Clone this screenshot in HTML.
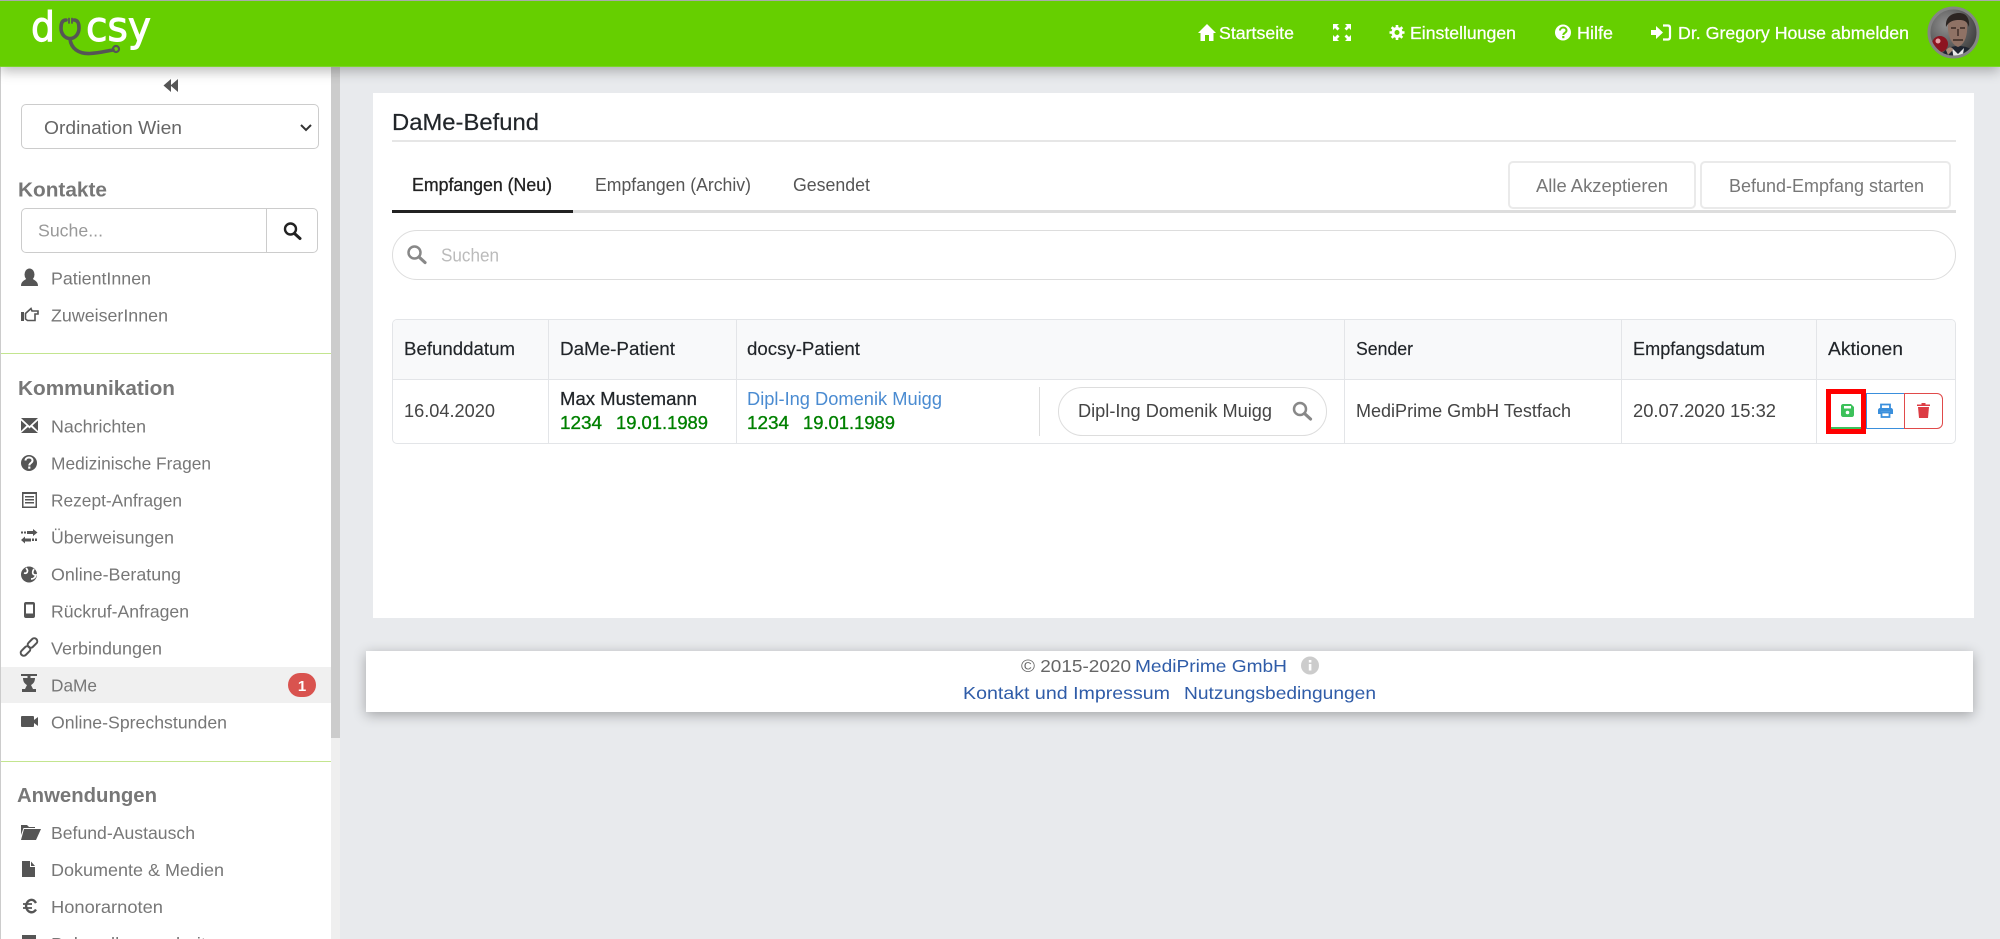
<!DOCTYPE html>
<html lang="de"><head><meta charset="utf-8"><title>docsy – DaMe-Befund</title>
<style>
html,body{margin:0;padding:0;width:2000px;height:939px;overflow:hidden;background:#e8eaed;font-family:"Liberation Sans",sans-serif}
.b{position:absolute;box-sizing:border-box}
svg{position:absolute;left:0;top:0;filter:blur(.3px)}
text{font-family:"Liberation Sans",sans-serif}
.s{font-size:17.5px;fill:#777}
.h{font-size:20px;font-weight:bold;fill:#777}
.w{font-size:17.5px;fill:#fff;stroke:#fff;stroke-width:.25}
.t{font-size:18.5px;fill:#444}
.th{font-size:18.5px;fill:#212529;stroke:#212529;stroke-width:.15}
.g{font-size:18.5px;fill:#008000;stroke:#008000;stroke-width:.35}
.f{font-size:17.5px;fill:#2f5ca8}
</style></head><body>
<div class="b" style="left:0;top:1px;width:331px;height:938px;background:#fff;border-left:1px solid #ccc"></div>
<div class="b" style="left:331px;top:66px;width:9px;height:672px;background:#ccc"></div>
<div class="b" style="left:331px;top:738px;width:9px;height:201px;background:#efefef"></div>
<div class="b" style="left:0;top:0;width:2000px;height:67px;background:#66cf00;border-top:1px solid #aaa;border-bottom:1px solid #7ad42a;box-shadow:0 4px 12px rgba(0,0,0,.28)"></div>
<div class="b" style="left:21px;top:104px;width:298px;height:45px;border:1px solid #ccc;border-radius:5px"></div>
<div class="b" style="left:21px;top:208px;width:297px;height:45px;border:1px solid #ccc;border-radius:5px"></div>
<div class="b" style="left:266px;top:209px;width:1px;height:43px;background:#ccc"></div>
<div class="b" style="left:1px;top:353px;width:330px;height:1px;background:#c3e58f"></div>
<div class="b" style="left:1px;top:761px;width:330px;height:1px;background:#c3e58f"></div>
<div class="b" style="left:1px;top:667px;width:330px;height:36px;background:#f0f0f0"></div>
<div class="b" style="left:288px;top:673px;width:28px;height:24px;background:#d9534f;border-radius:12px"></div>
<div class="b" style="left:373px;top:93px;width:1601px;height:525px;background:#fff"></div>
<div class="b" style="left:392px;top:140px;width:1564px;height:2px;background:#e6e6e6"></div>
<div class="b" style="left:392px;top:210px;width:1564px;height:3px;background:#ddd"></div>
<div class="b" style="left:392px;top:210px;width:181px;height:3px;background:#222"></div>
<div class="b" style="left:1508px;top:161px;width:188px;height:48px;background:#fff;border:2px solid #eaeaea;border-radius:5px"></div>
<div class="b" style="left:1700px;top:161px;width:251px;height:48px;background:#fff;border:2px solid #eaeaea;border-radius:5px"></div>
<div class="b" style="left:392px;top:230px;width:1564px;height:50px;border:1px solid #ddd;border-radius:25px"></div>
<div class="b" style="left:392px;top:319px;width:1564px;height:125px;border:1px solid #e3e5e8;border-radius:5px;background:#fff;overflow:hidden">
  <div class="b" style="left:0;top:0;width:100%;height:60px;background:#f8f9fa;border-bottom:1px solid #e3e5e8"></div>
  <div class="b" style="left:155px;top:0;width:1px;height:125px;background:#e3e5e8"></div>
  <div class="b" style="left:343px;top:0;width:1px;height:125px;background:#e3e5e8"></div>
  <div class="b" style="left:951px;top:0;width:1px;height:125px;background:#e3e5e8"></div>
  <div class="b" style="left:1228px;top:0;width:1px;height:125px;background:#e3e5e8"></div>
  <div class="b" style="left:1423px;top:0;width:1px;height:125px;background:#e3e5e8"></div>
</div>
<div class="b" style="left:1039px;top:387px;width:1px;height:49px;background:#ddd"></div>
<div class="b" style="left:1058px;top:387px;width:269px;height:49px;border:1px solid #ddd;border-radius:25px"></div>
<div class="b" style="left:1866px;top:393px;width:39px;height:36px;border:1px solid #3a8fdc"></div>
<div class="b" style="left:1904px;top:393px;width:39px;height:36px;border:1px solid #e04a4a;border-radius:0 6px 6px 0"></div>
<div class="b" style="left:1831px;top:427px;width:30px;height:2px;background:#3cc15a"></div>
<div class="b" style="left:1826px;top:389px;width:40px;height:45px;border:5px solid #f00"></div>
<div class="b" style="left:366px;top:651px;width:1607px;height:61px;background:#fff;box-shadow:0 3px 12px rgba(0,0,0,.3)"></div>

<svg width="2000" height="939" viewBox="0 0 2000 939">
<!-- logo -->
<text x="31" y="41" style="font-family:'DejaVu Sans',sans-serif;font-size:41px;fill:#fff;stroke:#fff;stroke-width:1" textLength="24" lengthAdjust="spacingAndGlyphs">d</text>
<text x="86" y="41" style="font-family:'DejaVu Sans',sans-serif;font-size:41px;fill:#fff;stroke:#fff;stroke-width:1" textLength="65" lengthAdjust="spacingAndGlyphs">csy</text>
<g fill="none" stroke="#555" stroke-width="3.6" stroke-linecap="round">
<path d="M66 20C62 20 61 24 61 28C61 34 65 38.500 70 38.500C75 38.500 79 34 79 28C79 24 78 20 74 20"/>
<path d="M69 18.500V23M72 18.500V23" stroke-width="1.800"/>
<path d="M70 39C71 48 78 54 90 53.500C100 53 106 51 113 50"/>
<circle cx="116" cy="49" r="3" stroke-width="2.200"/>
</g>
<!-- header nav -->
<path fill="#fff" d="M1207 24L1216 33H1213.500V41H1209V35H1205V41H1200.500V33H1198Z"/>
<text class="w" x="1219" y="39" textLength="75" lengthAdjust="spacingAndGlyphs">Startseite</text>
<g fill="#fff"><path d="M1333 24H1339L1337 26L1339.500 28.500L1337.500 30.500L1335 28L1333 30Z"/><path d="M1351 24H1345L1347 26L1344.500 28.500L1346.500 30.500L1349 28L1351 30Z"/><path d="M1333 41H1339L1337 39L1339.500 36.500L1337.500 34.500L1335 37L1333 35Z"/><path d="M1351 41H1345L1347 39L1344.500 36.500L1346.500 34.500L1349 37L1351 35Z"/></g>
<g stroke="#fff" stroke-width="2.600"><path d="M1397 25V40M1389.500 32.500H1404.500M1391.700 27.200L1402.300 37.800M1402.300 27.200L1391.700 37.800"/></g>
<circle cx="1397" cy="32.500" r="4" fill="#66cf00" stroke="#fff" stroke-width="3"/>
<text class="w" x="1410" y="39" textLength="106" lengthAdjust="spacingAndGlyphs">Einstellungen</text>
<circle cx="1563" cy="32.500" r="8" fill="#fff"/>
<path d="M1560 30.500C1560 26.500 1566.500 26.500 1566.500 30.500C1566.500 32.800 1563.300 32.800 1563.300 35" fill="none" stroke="#66cf00" stroke-width="2"/><rect x="1562.200" y="36" width="2.200" height="2.200" fill="#66cf00"/>
<text class="w" x="1577" y="39" textLength="36" lengthAdjust="spacingAndGlyphs">Hilfe</text>
<path fill="#fff" d="M1651 30H1656V26L1663 32.500L1656 39V35H1651Z"/>
<path fill="none" stroke="#fff" stroke-width="2.200" d="M1663 25.500H1668C1669.500 25.500 1670 26.500 1670 28V37C1670 38.500 1669.500 39.500 1668 39.500H1663"/>
<text class="w" x="1678" y="39" textLength="231" lengthAdjust="spacingAndGlyphs">Dr. Gregory House abmelden</text>
<!-- avatar -->
<defs><clipPath id="av"><circle cx="1953.500" cy="32.500" r="24"/></clipPath><radialGradient id="abg" cx=".35" cy=".35" r=".75"><stop offset="0" stop-color="#8f8f8f"/><stop offset="1" stop-color="#333"/></radialGradient></defs>
<g clip-path="url(#av)">
<rect x="1928" y="7" width="52" height="52" fill="url(#abg)"/>
<path d="M1940 60C1942 50 1950 46 1958 46C1968 46 1976 50 1978 60Z" fill="#1f2530"/>
<path d="M1952 48L1958 54L1964 48L1962 60H1954Z" fill="#e8e8e8"/>
<path d="M1948 22C1947 32 1950 44 1958 47C1966 44 1968 32 1967 22C1963 18 1952 18 1948 22Z" fill="#8f7265"/>
<path d="M1946 27C1945 16 1953 13 1959 13C1966 13 1970 18 1969 27C1967 21 1964 20 1959 20C1954 20 1949 21 1946 27Z" fill="#2c2522"/>
<path d="M1951 28H1956M1960 28H1965M1958 29V36M1953 40H1963" stroke="#3a2a25" stroke-width="1.400" fill="none"/>
<circle cx="1940" cy="44" r="8" fill="#8d1420"/><circle cx="1938" cy="41" r="2.500" fill="#e6a0a5"/>
<path d="M1946 50C1949 46 1953 47 1953 50L1948 55Z" fill="#a88a78"/>
</g>
<circle cx="1953.500" cy="32.500" r="24.500" fill="none" stroke="#858585" stroke-width="3"/>
<!-- sidebar top -->
<path fill="#555" d="M171 79V92L163.500 85.500ZM178 79V92L170.500 85.500Z"/>
<text class="s" x="44" y="134" textLength="138" lengthAdjust="spacingAndGlyphs" style="fill:#666;font-size:18px">Ordination Wien</text>
<path d="M301 125L306 130L311 125" fill="none" stroke="#333" stroke-width="2"/>
<g transform="translate(0,-.6)">
<text class="h" x="18" y="197" textLength="89" lengthAdjust="spacingAndGlyphs">Kontakte</text>
<text class="s" x="38" y="237" textLength="65" lengthAdjust="spacingAndGlyphs" style="fill:#999">Suche...</text>
<text class="s" x="51" y="285" textLength="100" lengthAdjust="spacingAndGlyphs">PatientInnen</text>
<text class="s" x="51" y="322" textLength="117" lengthAdjust="spacingAndGlyphs">ZuweiserInnen</text>
<text class="s" x="51" y="433" textLength="95" lengthAdjust="spacingAndGlyphs">Nachrichten</text>
<text class="s" x="51" y="470" textLength="160" lengthAdjust="spacingAndGlyphs">Medizinische Fragen</text>
<text class="s" x="51" y="507" textLength="131" lengthAdjust="spacingAndGlyphs">Rezept-Anfragen</text>
<text class="s" x="51" y="544" textLength="123" lengthAdjust="spacingAndGlyphs">Überweisungen</text>
<text class="s" x="51" y="581" textLength="130" lengthAdjust="spacingAndGlyphs">Online-Beratung</text>
<text class="s" x="51" y="618" textLength="138" lengthAdjust="spacingAndGlyphs">Rückruf-Anfragen</text>
<text class="s" x="51" y="655" textLength="111" lengthAdjust="spacingAndGlyphs">Verbindungen</text>
<text class="s" x="51" y="692" textLength="46" lengthAdjust="spacingAndGlyphs">DaMe</text>
<text class="s" x="51" y="729" textLength="176" lengthAdjust="spacingAndGlyphs">Online-Sprechstunden</text>
</g>
<circle cx="290.500" cy="229" r="5.500" fill="none" stroke="#222" stroke-width="2.400"/><path d="M294.500 233.500L300 238.500" stroke="#222" stroke-width="3" stroke-linecap="round"/>
<text class="h" x="18" y="395" textLength="157" lengthAdjust="spacingAndGlyphs">Kommunikation</text>
<text x="302" y="691" text-anchor="middle" style="font-size:15px;font-weight:bold;fill:#fff">1</text>
<text class="h" x="17" y="802" textLength="140" lengthAdjust="spacingAndGlyphs">Anwendungen</text>
<text class="s" x="51" y="839" textLength="144" lengthAdjust="spacingAndGlyphs">Befund-Austausch</text>
<text class="s" x="51" y="876" textLength="173" lengthAdjust="spacingAndGlyphs">Dokumente &amp; Medien</text>
<text class="s" x="51" y="913" textLength="112" lengthAdjust="spacingAndGlyphs">Honorarnoten</text>
<text class="s" x="51" y="950" textLength="155" lengthAdjust="spacingAndGlyphs">Behandlungsarbeit</text>
<!-- sidebar icons -->
<g fill="#555">
<ellipse cx="29.500" cy="274.500" rx="5" ry="6"/><path d="M21 286C21 281 25 280 27 278.500H32C34 280 38 281 38 286Z"/>
<rect x="21" y="312" width="3" height="9"/><path d="M25.500 313.500L31 308.500L32 311H38V314H35V320.500H27.500L25.500 319Z" fill="none" stroke="#555" stroke-width="1.600"/>
<path d="M21 418H38L29.500 426ZM21 420.500L26.500 425.500L21 431ZM38 420.500L32.500 425.500L38 431ZM21 433L28 427L29.500 428.500L31 427L38 433Z"/>
<circle cx="29" cy="463" r="8"/>
<path d="M22 492H37V508H22ZM23.500 494V506.500H35.500V494Z" fill-rule="evenodd"/><path d="M25 496H34V497.500H25ZM25 499H34V500.500H25ZM25 502H34V503.500H25Z"/>
<path d="M27 531H33V529L37.500 532.500L33 536V534H27ZM21 531.500H23V533.500H21ZM24 531.500H26V533.500H24ZM31 538.500H25V536.500L21 540L25 543.500V541.500H31ZM32 538.500H34V541H32ZM35 538.500H37V541H35Z"/>
<circle cx="29" cy="574.500" r="8"/>
<path d="M26 602H33C34.500 602 35 603 35 604V616C35 617 34.500 618 33 618H26C24.500 618 24 617 24 616V604C24 603 24.500 602 26 602ZM26 604.500V613.500H33V604.500Z" fill-rule="evenodd"/>
<path d="M21 674H37V676H30.500V678H35C35 682 33 684 31 685L33 689H36V692H22V689H25L27 685C25 684 23 682 23 678H27.500V676H21Z"/>
<rect x="21" y="716" width="13" height="11" rx="1"/><path d="M34 720L38 717V726L34 723Z"/>
<path d="M24 829H41L36 840H21Z"/><path d="M21 825H27L29 827H35V828H23.500L21 835Z"/>
<path d="M22 861H30V867H35V877H22ZM31 861.500L35 866H31Z"/>
<path d="M22 935H36V939H22Z"/>
</g>
<path d="M25.500 460.500C25.500 456.500 32.500 456.500 32.500 460.500C32.500 463 29.300 463 29.300 465.500" fill="none" stroke="#fff" stroke-width="2"/><rect x="28.200" y="466.500" width="2.200" height="2.200" fill="#fff"/>
<path d="M26 568C29 571 27 574 24 573M34 569C32 572 32 575 36 575C35 578 33 579 31 579" fill="none" stroke="#fff" stroke-width="1.700"/>
<g fill="none" stroke="#555" stroke-width="2"><rect x="27" y="640" width="11" height="6" rx="3" transform="rotate(-45 32.500 643)"/><rect x="20" y="648" width="11" height="6" rx="3" transform="rotate(-45 25.500 651)"/></g>
<path d="M36 903C33 898 27 899 26 906C27 913 33 914 36 909.500" fill="none" stroke="#555" stroke-width="2.400"/><path d="M23 904H32M23 908H32" stroke="#555" stroke-width="1.800"/>
<!-- content text -->
<text x="392" y="130" textLength="147" lengthAdjust="spacingAndGlyphs" style="font-size:23.500px;fill:#212529;stroke:#212529;stroke-width:.2">DaMe-Befund</text>
<text x="412" y="191" textLength="140" lengthAdjust="spacingAndGlyphs" style="font-size:18.500px;fill:#222;stroke:#222;stroke-width:.3">Empfangen (Neu)</text>
<text x="595" y="191" textLength="156" lengthAdjust="spacingAndGlyphs" style="font-size:18.500px;fill:#555">Empfangen (Archiv)</text>
<text x="793" y="191" textLength="77" lengthAdjust="spacingAndGlyphs" style="font-size:18.500px;fill:#555">Gesendet</text>
<text x="1536" y="192" textLength="132" lengthAdjust="spacingAndGlyphs" style="font-size:18.500px;fill:#777">Alle Akzeptieren</text>
<text x="1729" y="192" textLength="195" lengthAdjust="spacingAndGlyphs" style="font-size:18.500px;fill:#777">Befund-Empfang starten</text>
<circle cx="414.500" cy="252.500" r="6" fill="none" stroke="#888" stroke-width="2.500"/><path d="M419 257L425 262.500" stroke="#888" stroke-width="3.200" stroke-linecap="round"/>
<text x="441" y="261.500" textLength="58" lengthAdjust="spacingAndGlyphs" style="font-size:18.500px;fill:#bbb">Suchen</text>
<text class="th" x="404" y="355" textLength="111" lengthAdjust="spacingAndGlyphs">Befunddatum</text>
<text class="th" x="560" y="355" textLength="115" lengthAdjust="spacingAndGlyphs">DaMe-Patient</text>
<text class="th" x="747" y="355" textLength="113" lengthAdjust="spacingAndGlyphs">docsy-Patient</text>
<text class="th" x="1356" y="355" textLength="57" lengthAdjust="spacingAndGlyphs">Sender</text>
<text class="th" x="1633" y="355" textLength="132" lengthAdjust="spacingAndGlyphs">Empfangsdatum</text>
<text class="th" x="1828" y="355" textLength="75" lengthAdjust="spacingAndGlyphs">Aktionen</text>
<text class="t" x="404" y="417" textLength="91" lengthAdjust="spacingAndGlyphs">16.04.2020</text>
<text x="560" y="405" textLength="137" lengthAdjust="spacingAndGlyphs" style="font-size:18.500px;fill:#212529;stroke:#212529;stroke-width:.25">Max Mustemann</text>
<text class="g" x="560" y="429" textLength="42" lengthAdjust="spacingAndGlyphs">1234</text>
<text class="g" x="616" y="429" textLength="92" lengthAdjust="spacingAndGlyphs">19.01.1989</text>
<text x="747" y="405" textLength="195" lengthAdjust="spacingAndGlyphs" style="font-size:18.500px;fill:#4a8bd1">Dipl-Ing Domenik Muigg</text>
<text class="g" x="747" y="429" textLength="42" lengthAdjust="spacingAndGlyphs">1234</text>
<text class="g" x="803" y="429" textLength="92" lengthAdjust="spacingAndGlyphs">19.01.1989</text>
<text class="t" x="1078" y="417" textLength="194" lengthAdjust="spacingAndGlyphs">Dipl-Ing Domenik Muigg</text>
<circle cx="1300" cy="409" r="6" fill="none" stroke="#888" stroke-width="2.500"/><path d="M1304.500 413.500L1310.500 419" stroke="#888" stroke-width="3.200" stroke-linecap="round"/>
<text class="t" x="1356" y="417" textLength="215" lengthAdjust="spacingAndGlyphs">MediPrime GmbH Testfach</text>
<text class="t" x="1633" y="417" textLength="143" lengthAdjust="spacingAndGlyphs">20.07.2020 15:32</text>
<!-- action icons -->
<path fill="#3cc15a" d="M1841 406C1841 405 1842 404 1843 404H1851L1854 407V415C1854 416 1853 417 1852 417H1843C1842 417 1841 416 1841 415Z"/><rect x="1844" y="406" width="7" height="2.500" fill="#fff"/><circle cx="1847.500" cy="412.500" r="1.800" fill="#fff"/>
<g fill="none" stroke="#3a8fdc" stroke-width="1.800"><path d="M1881 408V404.500H1890V408"/><rect x="1881.500" y="412.500" width="8" height="4.500"/></g><path fill="#3a8fdc" d="M1880 408H1891C1892 408 1893 409 1893 410V414H1890V411.500H1881V414H1878V410C1878 409 1879 408 1880 408Z"/>
<path fill="#dc3c44" d="M1917 404.500H1921.500V403H1925.500V404.500H1930V406H1917ZM1918 407H1929L1928 418H1919Z"/>
<!-- footer -->
<text x="1021" y="672" textLength="110" lengthAdjust="spacingAndGlyphs" style="font-size:17.500px;fill:#666">© 2015-2020</text>
<text class="f" x="1135" y="672" textLength="152" lengthAdjust="spacingAndGlyphs">MediPrime GmbH</text>
<circle cx="1310" cy="665.500" r="9" fill="#ccc"/><rect x="1308.800" y="664" width="2.600" height="6.500" fill="#fff"/><rect x="1308.800" y="660" width="2.600" height="2.500" fill="#fff"/>
<text class="f" x="963" y="699" textLength="207" lengthAdjust="spacingAndGlyphs">Kontakt und Impressum</text>
<text class="f" x="1184" y="699" textLength="192" lengthAdjust="spacingAndGlyphs">Nutzungsbedingungen</text>
</svg>
</body></html>
